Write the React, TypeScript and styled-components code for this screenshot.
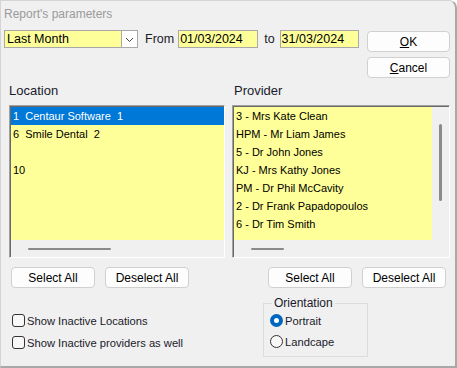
import { FC } from "react"
import styled, { createGlobalStyle } from "styled-components"

const GlobalStyle = createGlobalStyle`
    html, body {
        margin: 0;
        padding: 0;
        background: #ffffff;
    }
    body {
        font-family: "Liberation Sans", Arial, sans-serif;
        font-size: 12px;
        color: #000;
    }
`

const locations = ["1  Centaur Software  1", "6  Smile Dental  2", "", "10"]
const providers = [
    "3 - Mrs Kate Clean",
    "HPM - Mr Liam James",
    "5 - Dr John Jones",
    "KJ - Mrs Kathy Jones",
    "PM - Dr Phil McCavity",
    "2 - Dr Frank Papadopoulos",
    "6 - Dr Tim Smith",
]

type ListProps = {
    items: string[]
    selected?: number
    vertical?: boolean
    thumbLeft: number
    thumbWidth: number
}

const ListPanel: FC<ListProps> = (props) => {
    return (
        <ListBox>
            <ListInner>
                <ListBody>
                    {props.items.map((item, i) => (
                        <ListRow key={i} $selected={i === props.selected}>{item}</ListRow>
                    ))}
                </ListBody>
                {props.vertical && (
                    <VScroll>
                        <VThumb />
                    </VScroll>
                )}
            </ListInner>
            <HScroll>
                <HThumb style={{ marginLeft: props.thumbLeft, width: props.thumbWidth }} />
            </HScroll>
        </ListBox>
    )
}

const App: FC = () => {
    return (
        <>
            <GlobalStyle />
            <Window>
                <Title>Report's parameters</Title>

                <TopSection>
                    <RangeRow>
                        <Combo>
                            <ComboText>Last Month</ComboText>
                            <ComboArrow>
                                <svg width="9" height="6" viewBox="0 0 9 6">
                                    <path d="M1 1 L4.5 4.5 L8 1" fill="none" stroke="#444" strokeWidth="1" />
                                </svg>
                            </ComboArrow>
                        </Combo>
                        <FieldLabel $gap={7}>From</FieldLabel>
                        <DateBox $gap={4} $width={80}>01/03/2024</DateBox>
                        <FieldLabel $gap={6}>to</FieldLabel>
                        <DateBox $gap={5} $width={79}>31/03/2024</DateBox>
                    </RangeRow>
                    <ActionColumn>
                        <ActionButton><u>O</u>K</ActionButton>
                        <ActionButton><u>C</u>ancel</ActionButton>
                    </ActionColumn>
                </TopSection>

                <ListsGrid>
                    <Panel>
                        <PanelLabel>Location</PanelLabel>
                        <ListPanel items={locations} selected={0} thumbLeft={17} thumbWidth={83} />
                        <ButtonRow>
                            <SmallButton>Select All</SmallButton>
                            <SmallButton>Deselect All</SmallButton>
                        </ButtonRow>
                    </Panel>
                    <Panel>
                        <PanelLabel $indent={2}>Provider</PanelLabel>
                        <ListPanel items={providers} vertical thumbLeft={17} thumbWidth={33} />
                        <ButtonRow $right>
                            <SmallButton>Select All</SmallButton>
                            <SmallButton>Deselect All</SmallButton>
                        </ButtonRow>
                    </Panel>
                </ListsGrid>

                <BottomGrid>
                    <Checks>
                        <CheckLine>
                            <CheckBox />
                            Show Inactive Locations
                        </CheckLine>
                        <CheckLine>
                            <CheckBox />
                            Show Inactive providers as well
                        </CheckLine>
                    </Checks>
                    <Group>
                        <Legend>Orientation</Legend>
                        <RadioLine>
                            <Radio $checked />
                            Portrait
                        </RadioLine>
                        <RadioLine>
                            <Radio />
                            Landcape
                        </RadioLine>
                    </Group>
                </BottomGrid>
            </Window>
        </>
    )
}

export default App

const Window = styled.div`
    box-sizing: border-box;
    width: 457px;
    height: 368px;
    background: #f0f0f0;
    border: 1px solid #d4d4d4;
    border-right: 2px solid #a8a8a8;
    border-bottom: 2px solid #a8a8a8;
    border-top-right-radius: 8px;
    display: flex;
    flex-direction: column;
    overflow: hidden;
`

const Title = styled.div`
    height: 29px;
    padding: 6px 0 0 3px;
    box-sizing: border-box;
    color: #9a9a9a;
    font-size: 12px;
    line-height: 15px;
`

const TopSection = styled.div`
    display: flex;
    align-items: flex-start;
    padding: 0 5px 0 3px;
    height: 49px;
`

const RangeRow = styled.div`
    display: flex;
    align-items: center;
    height: 18px;
`

const Combo = styled.div`
    box-sizing: border-box;
    width: 134px;
    height: 18px;
    display: flex;
    border: 1px solid #a9a9a9;
    background: #ffff99;
`

const ComboText = styled.div`
    flex: 1;
    padding-left: 2px;
    font-size: 12.5px;
    line-height: 16px;
`

const ComboArrow = styled.div`
    width: 16px;
    display: flex;
    align-items: center;
    justify-content: center;
    background: #ffffff;
    border-left: 1px solid #a9a9a9;
    padding-top: 2px;
    box-sizing: border-box;
`

const FieldLabel = styled.span<{ $gap: number }>`
    margin-left: ${(p) => p.$gap}px;
    font-size: 12.5px;
    color: #1a1a2a;
`

const DateBox = styled.div<{ $gap: number; $width: number }>`
    box-sizing: border-box;
    margin-left: ${(p) => p.$gap}px;
    width: ${(p) => p.$width}px;
    height: 18px;
    border: 1px solid #a9a9a9;
    background: #ffff99;
    padding-left: 1px;
    font-size: 12.5px;
    line-height: 16px;
`

const ActionColumn = styled.div`
    margin-left: auto;
    margin-top: 1px;
    display: flex;
    flex-direction: column;
    gap: 5px;
`

const ActionButton = styled.button`
    box-sizing: border-box;
    width: 83px;
    height: 21px;
    padding: 0;
    background: #fdfdfd;
    border: 1px solid #d0d0d0;
    border-radius: 4px;
    font-family: "Liberation Sans", Arial, sans-serif;
    font-size: 12px;
    color: #000;
`

const ListsGrid = styled.div`
    display: grid;
    grid-template-columns: 216px 218px;
    column-gap: 7px;
    padding-left: 8px;
`

const Panel = styled.div`
    display: flex;
    flex-direction: column;
`

const PanelLabel = styled.div<{ $indent?: number }>`
    height: 26px;
    padding: 4px 0 0 ${(p) => p.$indent ?? 0}px;
    box-sizing: border-box;
    font-size: 13px;
    line-height: 15px;
    color: #1a1a2a;
`

const ListBox = styled.div`
    box-sizing: border-box;
    height: 153px;
    border-top: 1px solid #a0a0a0;
    border-left: 1px solid #a0a0a0;
    border-right: 1px solid #ffffff;
    border-bottom: 1px solid #ffffff;
    box-shadow: inset 1px 1px 0 #696969;
    padding: 1px 0 0 1px;
    display: flex;
    flex-direction: column;
`

const ListInner = styled.div`
    flex: 1;
    display: flex;
    min-height: 0;
`

const ListBody = styled.div`
    flex: 1;
    background: #ffff99;
    overflow: hidden;
`

const ListRow = styled.div<{ $selected?: boolean }>`
    height: 18px;
    line-height: 18px;
    padding-left: 2px;
    font-size: 11px;
    white-space: pre;
    background: ${(p) => (p.$selected ? "#0078d7" : "transparent")};
    color: ${(p) => (p.$selected ? "#ffffff" : "#000000")};
`

const VScroll = styled.div`
    width: 17px;
    display: flex;
    justify-content: center;
    padding-top: 17px;
    box-sizing: border-box;
`

const VThumb = styled.div`
    width: 3px;
    height: 77px;
    border-radius: 2px;
    background: #8a8a8a;
`

const HScroll = styled.div`
    height: 17px;
    display: flex;
    align-items: center;
`

const HThumb = styled.div`
    height: 2px;
    border-radius: 2px;
    background: #8a8a8a;
`

const ButtonRow = styled.div<{ $right?: boolean }>`
    display: flex;
    gap: 10px;
    margin-top: 9px;
    justify-content: ${(p) => (p.$right ? "flex-end" : "flex-start")};
    padding: ${(p) => (p.$right ? "0 4px 0 0" : "0 0 0 2px")};
`

const SmallButton = styled(ActionButton)`
    width: 84px;
`

const BottomGrid = styled.div`
    display: grid;
    grid-template-columns: 216px 218px;
    column-gap: 7px;
    padding-left: 8px;
    margin-top: 8px;
`

const Checks = styled.div`
    display: flex;
    flex-direction: column;
    gap: 9px;
    padding: 18px 0 0 3px;
`

const CheckLine = styled.label`
    display: flex;
    align-items: center;
    gap: 2px;
    height: 13px;
    font-size: 11.2px;
    color: #1a1a2a;
`

const CheckBox = styled.span`
    box-sizing: border-box;
    width: 13px;
    height: 13px;
    border: 1px solid #333;
    border-radius: 3px;
    background: #f8f8f8;
`

const Group = styled.fieldset`
    box-sizing: border-box;
    margin: 0 0 0 31px;
    width: 105px;
    height: 61px;
    padding: 4px 0 0 6px;
    border: 1px solid #dcdcdc;
    display: flex;
    flex-direction: column;
    gap: 8px;
`

const Legend = styled.legend`
    padding: 0 2px;
    margin-left: 2px;
    font-size: 12px;
    color: #1a1a2a;
`

const RadioLine = styled.label`
    display: flex;
    align-items: center;
    gap: 2px;
    height: 13px;
    font-size: 11.2px;
    color: #1a1a2a;
`

const Radio = styled.span<{ $checked?: boolean }>`
    box-sizing: border-box;
    width: 13px;
    height: 13px;
    border-radius: 50%;
    border: ${(p) => (p.$checked ? "4px solid #0067c0" : "1px solid #333")};
    background: ${(p) => (p.$checked ? "#ffffff" : "#f8f8f8")};
`
